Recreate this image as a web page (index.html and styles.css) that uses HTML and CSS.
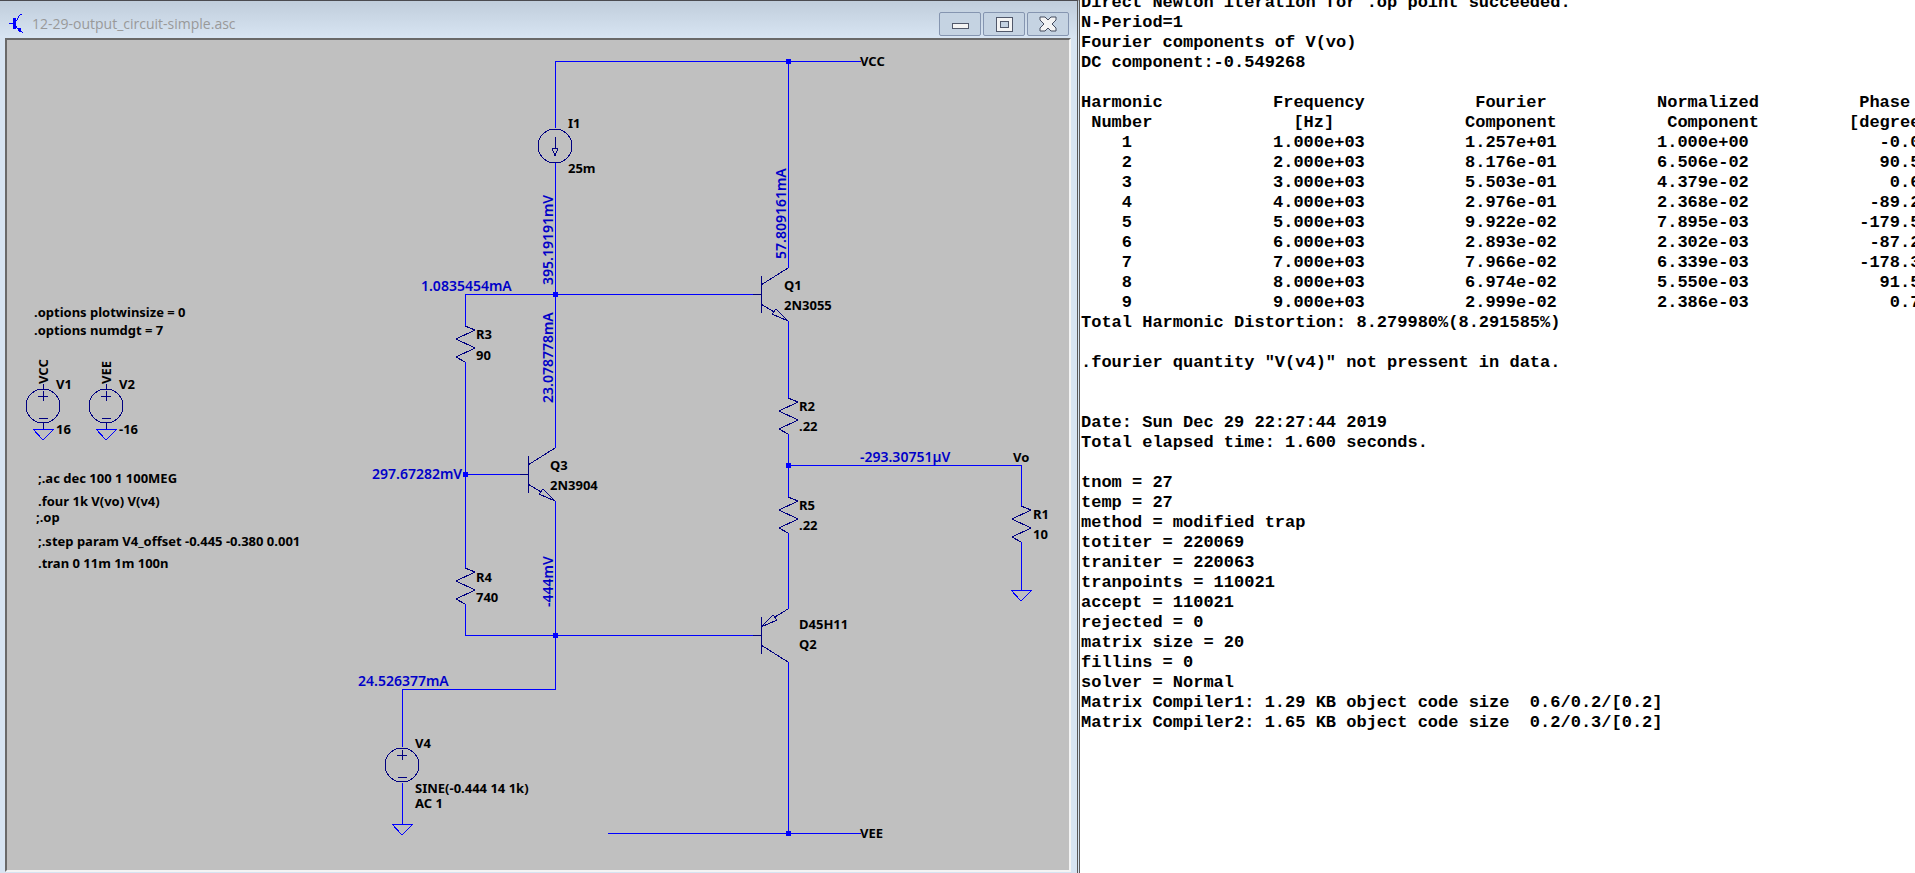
FILE: index.html
```html
<!DOCTYPE html>
<html lang="en">
<head>
<meta charset="utf-8">
<title>12-29-output_circuit-simple.asc</title>
<link rel="stylesheet" href="styles.css">
</head>
<body>
<main class="workspace">
  <section class="window">
    <header class="titlebar">
      <svg class="app-icon" width="16" height="22" viewBox="0 0 16 22" shape-rendering="crispEdges" aria-hidden="true">
        <path d="M0 10h5v1H0zM4 5h3v11H4zM7 7h1v1H7zM8 5h1v2H8zM9 3h1v2H9zM10 2h1v1h-1zM11 1h2v1h-2zM7 13h1v2H7zM8 15h1v1H8zM9 15h3v4h-2v-1H9zM12 18h1v1h-1zM13 19h1v1h-1z" fill="#0000ff"/>
      </svg>
      <h1 class="title">12-29-output_circuit-simple.asc</h1>
      <div class="window-buttons">
        <button class="window-button" type="button" aria-label="Minimize">
          <svg width="20" height="18" viewBox="0 0 20 18" shape-rendering="crispEdges"><rect x="2" y="8" width="16" height="5" fill="#f4f4f4" stroke="#51586a"/></svg>
        </button>
        <button class="window-button" type="button" aria-label="Restore">
          <svg width="20" height="18" viewBox="0 0 20 18" shape-rendering="crispEdges"><path d="M2 2h16v14H2zM6 6v6h8V6z" fill="#f4f4f4" fill-rule="evenodd" stroke="#51586a"/></svg>
        </button>
        <button class="window-button" type="button" aria-label="Close">
          <svg width="20" height="18" viewBox="0 0 20 18"><path d="M2 2h5l3 3 3-3h5v3l-4 4 4 4v3h-5l-3-3-3 3H2v-3l4-4-4-4z" fill="#f4f4f4" stroke="#454c5e" stroke-linejoin="round"/></svg>
        </button>
      </div>
    </header>
    <div class="canvas">
      <svg class="schematic" width="1062" height="830" viewBox="7 40 1062 830" role="img" aria-label="Output circuit schematic">
        <defs>
          <path id="resistor" d="M0 0L10 4L-9 13L10 22L-9 31L0 36"/>
          <path id="ground" d="M-10 0H11L0 11Z"/>
          <g id="source">
            <circle r="17"/>
            <path d="M-5 -10H5M0 -15V-5M-4 12H5"/>
          </g>
          <g id="npn">
            <path d="M-8 0H0M0 -18V19M0 -9L27 -26M0 10L13 18"/>
            <path d="M27 27L15 15L11 20Z"/>
          </g>
        </defs>

        <g class="wire">
          <path d="M861 61H555V128M788 61V268"/>
          <path d="M555 163V448M465 326V294H753M465 362V568"/>
          <path d="M465 474H520M555 501V689H402V747M465 604V635H753"/>
          <path d="M402 783V824M788 321V398M788 434V497M788 533V609"/>
          <path d="M788 465H1021V506M1021 542V590M788 662V833M608 833H861"/>
          <use href="#ground" x="402" y="824"/>
          <use href="#ground" x="1021" y="590"/>
          <use href="#ground" x="43" y="429"/>
          <use href="#ground" x="106" y="429"/>
        </g>
        <g class="part">
          <circle cx="555" cy="146" r="17"/>
          <path d="M555 137V148M552 148H558L555 156Z"/>
          <use href="#source" x="402" y="765"/>
          <use href="#source" x="43" y="406"/>
          <use href="#source" x="106" y="406"/>
          <path d="M43 384V389M43 423V429M106 384V389M106 423V429"/>
          <use href="#resistor" x="465" y="326"/>
          <use href="#resistor" x="465" y="568"/>
          <use href="#resistor" x="788" y="398"/>
          <use href="#resistor" x="788" y="497"/>
          <use href="#resistor" x="1021" y="506"/>
          <use href="#npn" x="528" y="474"/>
          <use href="#npn" x="761" y="294"/>
          <path d="M753 635H761M761 617V654M788 609L775 617M761 645L788 662"/>
          <path d="M761 627L773 615L777 620Z"/>
        </g>
        <path class="node" d="M786 59h5v5h-5zM553 292h5v5h-5zM463 472h5v5h-5zM553 633h5v5h-5zM786 463h5v5h-5zM786 831h5v5h-5z"/>

        <g class="label">
          <text x="34" y="317">.options plotwinsize = 0</text>
          <text x="34" y="335">.options numdgt = 7</text>
          <text transform="translate(48 384) rotate(-90)">VCC</text>
          <text transform="translate(111 384) rotate(-90)">VEE</text>
          <text x="56" y="389">V1</text>
          <text x="119" y="389">V2</text>
          <text x="56" y="434">16</text>
          <text x="119" y="434">-16</text>
          <text x="38" y="483">;.ac dec 100 1 100MEG</text>
          <text x="38" y="506">.four 1k V(vo) V(v4)</text>
          <text x="36" y="522">;.op</text>
          <text x="38" y="546">;.step param V4_offset -0.445 -0.380 0.001</text>
          <text x="38" y="568">.tran 0 11m 1m 100n</text>
          <text x="568" y="128">I1</text>
          <text x="568" y="173">25m</text>
          <text x="860" y="66">VCC</text>
          <text x="476" y="339">R3</text>
          <text x="476" y="360">90</text>
          <text x="550" y="470">Q3</text>
          <text x="550" y="490">2N3904</text>
          <text x="476" y="582">R4</text>
          <text x="476" y="602">740</text>
          <text x="415" y="748">V4</text>
          <text x="415" y="793">SINE(-0.444 14 1k)</text>
          <text x="415" y="808">AC 1</text>
          <text x="860" y="838">VEE</text>
          <text x="784" y="290">Q1</text>
          <text x="784" y="310">2N3055</text>
          <text x="799" y="411">R2</text>
          <text x="799" y="431">.22</text>
          <text x="799" y="510">R5</text>
          <text x="799" y="530">.22</text>
          <text x="1013" y="462">Vo</text>
          <text x="1033" y="519">R1</text>
          <text x="1033" y="539">10</text>
          <text x="799" y="629">D45H11</text>
          <text x="799" y="649">Q2</text>
        </g>
        <g class="label reading">
          <text x="421" y="291">1.0835454mA</text>
          <text x="372" y="479">297.67282mV</text>
          <text x="358" y="686">24.526377mA</text>
          <text x="860" y="462">-293.30751µV</text>
          <text transform="translate(553 285) rotate(-90)">395.19191mV</text>
          <text transform="translate(553 403) rotate(-90)">23.078778mA</text>
          <text transform="translate(553 607) rotate(-90)">-444mV</text>
          <text transform="translate(786 259) rotate(-90)">57.809161mA</text>
        </g>
      </svg>
    </div>
  </section>

  <section class="log" aria-label="Error log">
    <div class="log-content">
<pre class="log-text">Direct Newton iteration for .op point succeeded.
N-Period=1
Fourier components of V(vo)
DC component:-0.549268

</pre>
      <table class="harmonics">
        <thead>
          <tr><th>Harmonic</th><th>Frequency</th><th> Fourier</th><th>Normalized</th><th> Phase</th></tr>
          <tr><th> Number</th><th>  [Hz]</th><th>Component</th><th> Component</th><th>[degree]</th></tr>
        </thead>
        <tbody>
          <tr><td>    1</td><td>1.000e+03</td><td>1.257e+01</td><td>1.000e+00</td><td>   -0.0</td></tr>
          <tr><td>    2</td><td>2.000e+03</td><td>8.176e-01</td><td>6.506e-02</td><td>   90.5</td></tr>
          <tr><td>    3</td><td>3.000e+03</td><td>5.503e-01</td><td>4.379e-02</td><td>    0.6</td></tr>
          <tr><td>    4</td><td>4.000e+03</td><td>2.976e-01</td><td>2.368e-02</td><td>  -89.2</td></tr>
          <tr><td>    5</td><td>5.000e+03</td><td>9.922e-02</td><td>7.895e-03</td><td> -179.5</td></tr>
          <tr><td>    6</td><td>6.000e+03</td><td>2.893e-02</td><td>2.302e-03</td><td>  -87.2</td></tr>
          <tr><td>    7</td><td>7.000e+03</td><td>7.966e-02</td><td>6.339e-03</td><td> -178.3</td></tr>
          <tr><td>    8</td><td>8.000e+03</td><td>6.974e-02</td><td>5.550e-03</td><td>   91.5</td></tr>
          <tr><td>    9</td><td>9.000e+03</td><td>2.999e-02</td><td>2.386e-03</td><td>    0.7</td></tr>
        </tbody>
      </table>
<pre class="log-text">Total Harmonic Distortion: 8.279980%(8.291585%)

.fourier quantity "V(v4)" not pressent in data.


Date: Sun Dec 29 22:27:44 2019
Total elapsed time: 1.600 seconds.

tnom = 27
temp = 27
method = modified trap
totiter = 220069
traniter = 220063
tranpoints = 110021
accept = 110021
rejected = 0
matrix size = 20
fillins = 0
solver = Normal
Matrix Compiler1: 1.29 KB object code size  0.6/0.2/[0.2]
Matrix Compiler2: 1.65 KB object code size  0.2/0.3/[0.2]
</pre>
    </div>
  </section>
</main>
</body>
</html>
```
FILE: styles.css
```css
* {
  box-sizing: border-box;
}

body {
  margin: 0;
  background: #ffffff;
}

.workspace {
  display: grid;
  grid-template-columns: minmax(0, 1080fr) minmax(0, 835fr);
  height: 100vh;
  overflow: hidden;
}

/* Schematic window */
.window {
  display: flex;
  flex-direction: column;
  min-height: 0;
  padding: 0 6px 1px 5px;
  border-top: 1px solid #4b4b50;
  border-right: 3px double #5a5a5a;
  background: linear-gradient(#c0cddb, #d7e4f2 36px, #d7e4f2);
}

.titlebar {
  display: flex;
  align-items: center;
  height: 37px;
  padding: 8px 2px 0 4px;
}

.app-icon {
  flex: none;
}

.title {
  flex: 1;
  margin: 0 0 0 7px;
  color: #999999;
  font: 400 14px/22px "Open Sans", "Noto Sans", sans-serif;
}

.window-buttons {
  display: flex;
  gap: 2px;
}

.window-button {
  display: grid;
  place-items: center;
  width: 42px;
  height: 24px;
  padding: 0;
  border: 1px solid #8595b0;
  border-radius: 2px;
  background: #c5d3e2;
}

.canvas {
  flex: 1;
  min-height: 0;
  overflow: hidden;
  border: 2px solid #696969;
  border-right-color: #f4f4f4;
  border-bottom-color: #f4f4f4;
  background: #c0c0c0;
}

.schematic {
  display: block;
}

.wire,
.part {
  fill: none;
  stroke-width: 1px;
  shape-rendering: crispEdges;
}

.wire {
  stroke: #0000ff;
}

.part {
  stroke: #000080;
}

.node {
  fill: #0000ff;
  shape-rendering: crispEdges;
}

.label {
  fill: #000000;
  font: 700 13px "Noto Sans", sans-serif;
}

.reading {
  fill: #0000c8;
  font-size: 14px;
  font-weight: 600;
}

/* Log pane, scrolled part of a line down */
.log {
  overflow: hidden;
  background: #ffffff;
}

.log-content {
  margin: -7px 0 0 1px;
  color: #000000;
  font: 700 17px/20px "Liberation Mono", monospace;
}

.log-text {
  margin: 0;
  font: inherit;
}

.harmonics {
  width: 960px;
  table-layout: fixed;
  border-collapse: collapse;
}

.harmonics th,
.harmonics td {
  height: 20px;
  padding: 0;
  text-align: left;
  white-space: pre;
}
```
